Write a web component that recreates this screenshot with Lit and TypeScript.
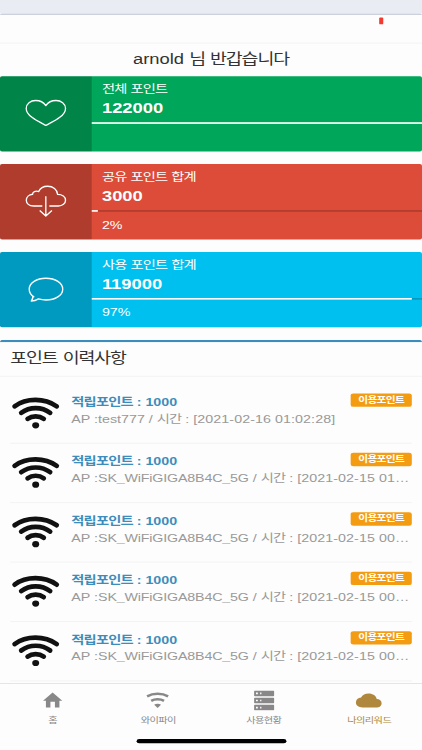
import { LitElement, html, css, svg } from "lit";
import { customElement, property } from "lit/decorators.js";

// Hangul runs get their own tracking, Latin keeps the default one.
const mixed = (text: string) =>
  text
    .split(/([\uac00-\ud7a3]+)/)
    .filter((t) => t)
    .map((t) => (/[\uac00-\ud7a3]/.test(t) ? html`<span class="ko">${t}</span>` : t));

const ko = css`
  .ko {
    letter-spacing: -0.06em;
  }
`;

const boxIcons: Record<string, unknown> = {
  heart: svg`<path d="M45.8 49.2C39 45.5 26.2 40 26.2 32.2C26.2 27.6 30.5 24.3 35.6 24.3C40.3 24.3 43.8 26.4 45.8 29.4C47.8 26.4 51.3 24.3 56 24.3C61.1 24.3 65.5 27.6 65.5 32.2C65.5 40 52.6 45.5 45.8 49.2Z"/>`,
  cloud: svg`<path d="M42.3 41.9H33.6C29 41.9 26.3 39.3 26.3 36.1C26.3 33 29 30.6 32.6 30.2C32.4 28.2 35.5 26.3 38.7 27.5C40 24.3 43.5 22.2 47.7 22.2C53 22.2 57.2 25.7 57.6 30.3C62.2 30.3 65.5 32.7 65.5 36.1C65.5 39.4 62.5 41.9 58.3 41.9H49.3M45.8 32.2V52M39.7 46.3L45.8 52L51.9 46.3"/>`,
  bubble: svg`<path d="M34.2 45.2C31 43.2 29.2 40.3 29.2 37.2C29.2 31 36.6 26.3 45.9 26.3C55.3 26.3 62.7 31 62.7 37.2C62.7 43.3 55.3 48 45.9 48C43.3 48 40.8 47.6 38.5 46.9C36.5 48.2 34.2 49.1 31.2 49.1C32.4 47.7 33.2 46.5 32.7 44.2"/>`,
};

@customElement("info-box")
class InfoBox extends LitElement {
  @property() tone = "green";
  @property() icon = "heart";
  @property() label = "";
  @property() value = "";
  @property() note = "";
  @property({ type: Number }) percent = 0;

  static styles = [
    ko,
    css`
      :host {
        display: block;
      }
      .box {
        display: flex;
        height: 90px;
        border-radius: 2px;
        overflow: hidden;
        color: #fff;
        font-size: 14px;
        line-height: 20px;
      }
      .green {
        background: #00a65a;
      }
      .red {
        background: #dd4b39;
      }
      .aqua {
        background: #00c0ef;
      }
      .icon {
        width: 90px;
        flex: none;
        background: rgba(0, 0, 0, 0.2);
      }
      svg {
        display: block;
        width: 90px;
        height: 90px;
        fill: none;
        stroke: #fff;
        stroke-width: 1.35;
        stroke-linejoin: round;
      }
      .content {
        flex: 1;
        padding: 5px 10px;
      }
      .value {
        height: 24.7px;
        font-size: 18px;
        font-weight: bold;
        line-height: 26.7px;
      }
      .track {
        height: 2.4px;
        margin: 5px -10px;
        background: rgba(0, 0, 0, 0.2);
      }
      .bar {
        height: 2.4px;
        background: #fff;
      }
    `,
  ];

  render() {
    return html`<div class="box ${this.tone}">
      <div class="icon">
        <svg viewBox="0 0 91.7 75.3" preserveAspectRatio="none">${boxIcons[this.icon]}</svg>
      </div>
      <div class="content">
        <div>${mixed(this.label)}</div>
        <div class="value">${this.value}</div>
        <div class="track"><div class="bar" style="width:${this.percent}%"></div></div>
        <div>${this.note}</div>
      </div>
    </div>`;
  }
}

@customElement("point-item")
class PointItem extends LitElement {
  @property() ap = "";
  @property() time = "";

  static styles = [
    ko,
    css`
      :host {
        display: flex;
        padding: 10px 0;
        border-bottom: 1px solid #f1f1f1;
        font-size: 14px;
        line-height: 20px;
      }
      svg {
        display: block;
        flex: none;
        width: 50px;
        height: 50px;
        fill: none;
        stroke: #111;
        stroke-width: 4.7;
        stroke-linecap: round;
      }
      .dot {
        fill: #111;
        stroke: none;
      }
      .info {
        flex: 1;
        min-width: 0;
        padding-left: 10px;
      }
      .head {
        display: flex;
        justify-content: space-between;
        align-items: flex-start;
        height: 20px;
      }
      .title {
        padding-top: 1px;
        color: #3c8dbc;
        font-weight: bold;
      }
      .badge {
        box-sizing: border-box;
        width: 60px;
        height: 16px;
        margin-top: 1px;
        border-radius: 2.6px;
        background: #f39c12;
        color: #fff;
        font-size: 10.5px;
        font-weight: bold;
        line-height: 14px;
        text-align: center;
      }
      .detail {
        padding-top: 1px;
        color: #999;
        white-space: nowrap;
      }
      .ssid {
        letter-spacing: -0.17px;
      }
      .time {
        letter-spacing: 0.07px;
      }
    `,
  ];

  render() {
    return html`<svg viewBox="0 0 51 41.85" preserveAspectRatio="none">
        <path d="M4.4 13.8C16 5.2 34.500 5.2 46.6 13.8M11 20.2C19.500 13.9 31.500 13.9 40 20.2M17.4 26.300C22 22.900 29 22.900 33.600 26.300" />
        <ellipse class="dot" cx="25.5" cy="32.7" rx="3.5" ry="3.1" />
      </svg>
      <div class="info">
        <div class="head">
          <span class="title">${mixed("적립포인트 : 1000")}</span>
          <span class="badge">${mixed("이용포인트")}</span>
        </div>
        <div class="detail">AP :<span class="${this.ap.length > 10 ? "ssid" : ""}">${this.ap}</span> / ${mixed("시간")} : <span class="time">${this.time}</span></div>
      </div>`;
  }
}

const tabIcons = [
  svg`<path d="M20 2L10.4 10.3H13.3V17H17.8V11.3H22.3V17H26.8V10.3H29.7Z"/>`,
  svg`<path class="line" d="M9.5 5.8C15.5 2.3 24.5 2.3 30.5 5.8M13.6 10.3C17.2 8.1 22.8 8.1 26.4 10.3"/><path d="M16.6 14.2C18.4 12.700 21.6 12.700 23.4 14.2L20 17.5Z"/>`,
  svg`<path fill-rule="evenodd" d="M11.2 0H29.8Q30.5 0 30.5 .7V4.9Q30.5 5.6 29.8 5.6H11.2Q10.5 5.6 10.5 4.9V.7Q10.5 0 11.2 0ZM12.4 2V3.7H14.2V2ZM16.5 2V3.7H17.8V2ZM11.2 7.1H29.8Q30.5 7.1 30.5 7.8V12Q30.5 12.7 29.8 12.7H11.2Q10.5 12.7 10.5 12V7.8Q10.5 7.1 11.2 7.1ZM12.4 9.1V10.8H14.2V9.1ZM16.5 9.1V10.8H17.8V9.1ZM11.2 14.2H29.8Q30.5 14.2 30.5 14.9V19.1Q30.5 19.8 29.8 19.8H11.2Q10.5 19.8 10.5 19.1V14.9Q10.5 14.2 11.2 14.2ZM12.4 16.2V17.9H14.2V16.2ZM16.5 16.2V17.9H17.8V16.2Z"/>`,
  svg`<path d="M14 16.9C9.8 16.9 7.3 14.9 7.3 12C7.3 9.3 9.4 7.3 12.5 7C13.8 4.6 16.5 3 20 3C24.3 3 27.5 5.3 28.1 8.4C31 8.5 33 10.2 33 12.6C33 15.2 30.8 16.9 27.5 16.9Z"/>`,
];

const tabs = ["홈", "와이파이", "사용현황", "나의리워드"];

const items = [
  { ap: "test777", time: "[2021-02-16 01:02:28]" },
  { ap: "SK_WiFiGIGA8B4C_5G", time: "[2021-02-15 01…" },
  { ap: "SK_WiFiGIGA8B4C_5G", time: "[2021-02-15 00…" },
  { ap: "SK_WiFiGIGA8B4C_5G", time: "[2021-02-15 00…" },
  { ap: "SK_WiFiGIGA8B4C_5G", time: "[2021-02-15 00…" },
];

@customElement("app-root")
class AppRoot extends LitElement {
  static styles = [
    ko,
    css`
      :host {
        display: block;
        width: 422px;
        height: 750px;
        overflow: hidden;
        background: #fdfdfd;
      }
      /* 414 x 896 phone layout, fitted to the 422 x 750 viewport */
      .screen {
        display: flex;
        flex-direction: column;
        width: 414px;
        height: 896px;
        transform: scale(1.01932, 0.83705);
        transform-origin: 0 0;
        overflow: hidden;
        background: #fdfdfd;
        color: #333;
        font-family: "Liberation Sans", "Noto Sans CJK KR", sans-serif;
      }
      .top {
        flex: none;
        height: 16px;
        background: #e9edf3;
      }
      .edge {
        flex: none;
        height: 2px;
        background: #cdd1db;
        border-radius: 2px 2px 0 0;
      }
      .nav {
        flex: none;
        display: flex;
        justify-content: flex-end;
        box-sizing: border-box;
        height: 34px;
        padding: 2.5px 38.5px 0 0;
        border-bottom: 1px solid #f1f1f1;
      }
      .mark {
        width: 3.3px;
        height: 8.5px;
        border-radius: 1px;
        background: #f23a30;
      }
      .hello {
        flex: none;
        height: 39px;
        font-size: 18px;
        line-height: 39px;
        text-align: center;
      }
      .boxes {
        flex: none;
        display: flex;
        flex-direction: column;
        gap: 15px;
      }
      .history {
        flex: 1;
        min-height: 0;
        margin-top: 15px;
        overflow: hidden;
        border-top: 3px solid #3c8dbc;
        border-radius: 3px;
      }
      .heading {
        height: 40px;
        padding: 0 10px;
        border-bottom: 1px solid #f1f1f1;
        font-size: 18px;
        line-height: 39px;
      }
      .list {
        padding: 9px 10px 0;
      }
      .tabbar {
        flex: none;
        box-sizing: border-box;
        height: 80px;
        border-top: 1px solid #e0e0e0;
      }
      .tabs {
        display: flex;
        height: 65px;
      }
      .tab {
        flex: 1;
        display: flex;
        flex-direction: column;
        align-items: center;
        padding-top: 8px;
        color: #888;
        font-size: 10px;
        line-height: 16px;
      }
      .tab svg {
        display: block;
        width: 40px;
        height: 24px;
        margin-bottom: 4px;
        fill: currentColor;
      }
      .tab .line {
        fill: none;
        stroke: currentColor;
        stroke-width: 2.6;
      }
      .active {
        color: #af883e;
      }
      .home {
        width: 147px;
        height: 5px;
        margin: 1px auto 0;
        border-radius: 3px;
        background: #000;
      }
    `,
  ];

  render() {
    return html`<div class="screen">
      <div class="top"></div>
      <div class="edge"></div>
      <div class="nav"><div class="mark"></div></div>
      <div class="hello">${mixed("arnold 님 반갑습니다")}</div>
      <div class="boxes">
        <info-box tone="green" icon="heart" label="전체 포인트" value="122000" percent="100"></info-box>
        <info-box tone="red" icon="cloud" label="공유 포인트 합계" value="3000" percent="2" note="2%"></info-box>
        <info-box tone="aqua" icon="bubble" label="사용 포인트 합계" value="119000" percent="97" note="97%"></info-box>
      </div>
      <div class="history">
        <div class="heading">${mixed("포인트 이력사항")}</div>
        <div class="list">
          ${items.map((d) => html`<point-item .ap=${d.ap} .time=${d.time}></point-item>`)}
        </div>
      </div>
      <div class="tabbar">
        <div class="tabs">
          ${tabs.map(
            (t, i) => html`<div class="tab ${i === 3 ? "active" : ""}">
              <svg viewBox="0 0 40.77 20.09" preserveAspectRatio="none">${tabIcons[i]}</svg>
              <span>${mixed(t)}</span>
            </div>`
          )}
        </div>
        <div class="home"></div>
      </div>
    </div>`;
  }
}
